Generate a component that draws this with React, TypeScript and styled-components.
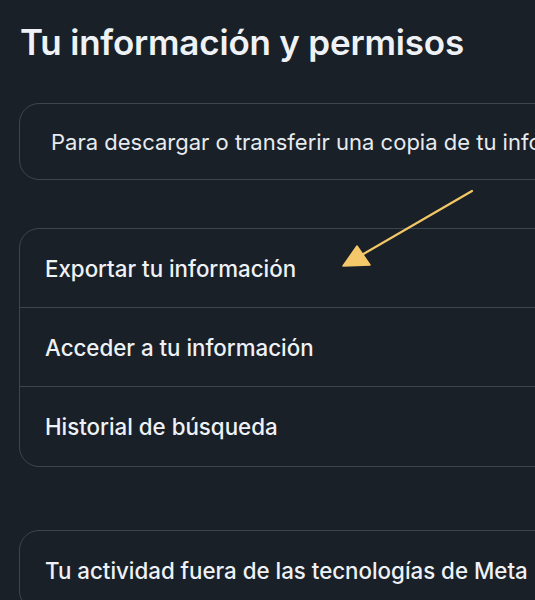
import React from "react";
import styled, { createGlobalStyle } from "styled-components";

const Global = createGlobalStyle`
  html, body { margin: 0; padding: 0; overflow: hidden; background: #1a2027; }
  body { font-family: Inter, "Noto Sans", sans-serif; color: #e9eef3; }
`;

const Page = styled.div`
  position: relative;
  width: 760px;
  height: 600px;
  padding: 0 0 0 19px;
  box-sizing: border-box;
  display: flex;
  flex-direction: column;
`;

const Title = styled.h1`
  margin: 22px 0 0 1px;
  font-size: 35px;
  line-height: 41px;
  font-weight: 600;
  letter-spacing: -0.2px;
  color: #eef2f6;
`;

const Card = styled.div<{ $top: number }>`
  margin-top: ${(p) => p.$top}px;
  border: 1px solid #3d4550;
  border-radius: 20px;
  display: flex;
  flex-direction: column;
`;

const InfoText = styled.div`
  height: 75px;
  display: flex;
  align-items: center;
  padding-left: 31px;
  font-size: 22px;
  font-weight: 400;
  letter-spacing: 0;
  white-space: nowrap;
  color: #e6ebf0;
`;

const Row = styled.div<{ $last?: boolean }>`
  height: 79px;
  display: flex;
  align-items: center;
  padding-left: 25px;
  font-size: 22.3px;
  font-weight: 500;
  white-space: nowrap;
  color: #eef2f6;
  border-bottom: ${(p) => (p.$last ? "none" : "1px solid #3d4550")};
  box-sizing: border-box;
`;

const Arrow = styled.svg`
  position: absolute;
  left: 0;
  top: 0;
  pointer-events: none;
`;

export default function App() {
  return (
    <>
      <Global />
      <Page>
        <Title>Tu información y permisos</Title>
        <Card $top={40}>
          <InfoText>Para descargar o transferir una copia de tu información, usa nuestra herramienta.</InfoText>
        </Card>
        <Card $top={48}>
          <Row>Exportar tu información</Row>
          <Row>Acceder a tu información</Row>
          <Row $last>Historial de búsqueda</Row>
        </Card>
        <Card $top={63}>
          <Row $last>Tu actividad fuera de las tecnologías de Meta</Row>
        </Card>
        <Arrow width="535" height="600" viewBox="0 0 535 600">
          <line x1="472" y1="191" x2="360" y2="256" stroke="#f2c766" strokeWidth="2.2" strokeLinecap="round" />
          <polygon points="343,266 357,246 370,265" fill="#f5c96a" stroke="#f5c96a" strokeWidth="1.5" strokeLinejoin="round" />
        </Arrow>
      </Page>
    </>
  );
}
